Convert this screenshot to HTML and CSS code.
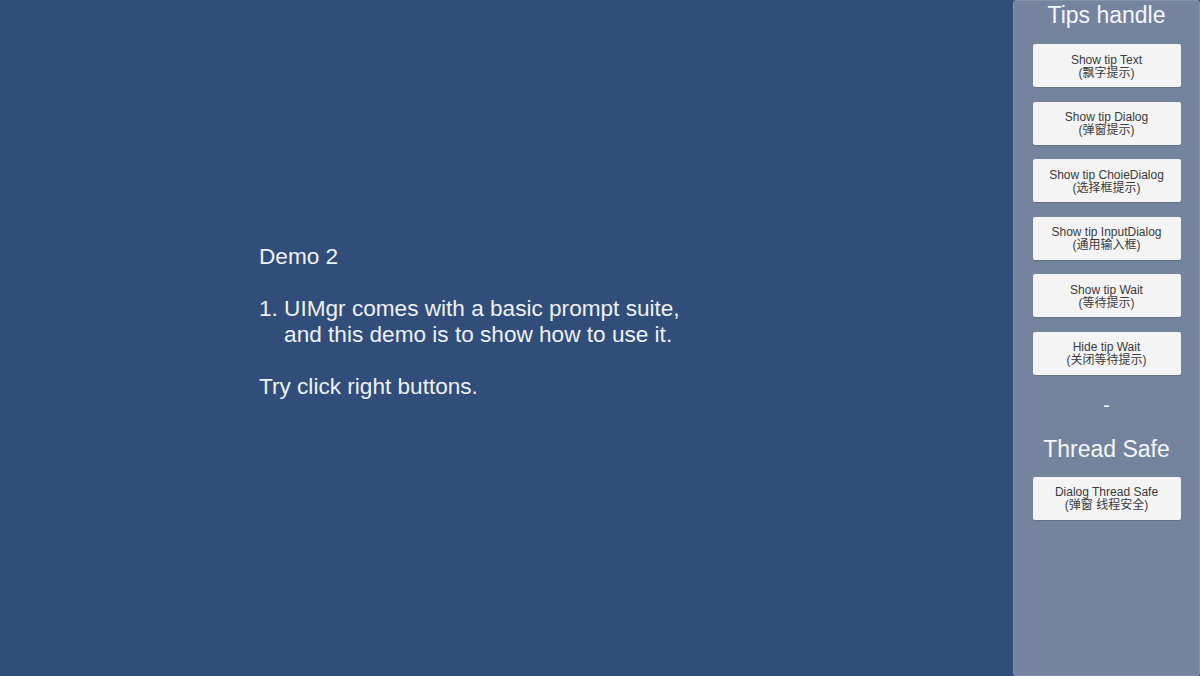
FILE: index.html
```html
<!DOCTYPE html>
<html lang="zh-CN">
<head>
    <meta charset="UTF-8">
    <meta name="viewport" content="width=device-width, initial-scale=1.0">
    <title>UIMgr Demo 2</title>
    <link rel="stylesheet" href="styles.css">
</head>
<body>
    <div class="screen">
        <div class="stage">
            <div class="intro">
                <p>Demo 2</p>
                <p class="gap">1. UIMgr comes with a basic prompt suite,<br>&nbsp;&nbsp;&nbsp;&nbsp;and this demo is to show how to use it.</p>
                <p class="gap">Try click right buttons.</p>
            </div>
        </div>

        <!-- Panel on the right -->
        <div class="panel">
            <div class="panel-title">Tips handle</div>
            <button class="tip-btn">Show tip Text<br>(飘字提示)</button>
            <button class="tip-btn">Show tip Dialog<br>(弹窗提示)</button>
            <button class="tip-btn">Show tip ChoieDialog<br>(选择框提示)</button>
            <button class="tip-btn">Show tip InputDialog<br>(通用输入框)</button>
            <button class="tip-btn">Show tip Wait<br>(等待提示)</button>
            <button class="tip-btn">Hide tip Wait<br>(关闭等待提示)</button>
            <div class="dash">-</div>
            <div class="panel-title section">Thread Safe</div>
            <button class="tip-btn">Dialog Thread Safe<br>(弹窗 线程安全)</button>
        </div>
    </div>
</body>
</html>
```

FILE: styles.css
```css
html, body {
    margin: 0;
    padding: 0;
}
body {
    font-family: "Liberation Sans", Arial, "Noto Sans CJK SC", sans-serif;
    background-color: #314d79;
    width: 1200px;
    height: 676px;
    overflow: hidden;
}
.screen {
    display: flex;
    height: 676px;
}
.stage {
    flex: 1;
    display: flex;
    align-items: flex-start;
    padding: 244px 0 0 259px;
}
.intro {
    color: #eef1f6;
    font-size: 22.6px;
    line-height: 26px;
}
.intro p {
    margin: 0;
}
.intro .gap {
    margin-top: 26px;
}

/* Painel da direita */
.panel {
    width: 185px;
    height: 674px;
    background-color: #74849f;
    border: 1px solid #8391aa;
    border-radius: 3px;
    display: flex;
    flex-direction: column;
    align-items: center;
    box-sizing: content-box;
}
.panel-title {
    color: #f4f6fa;
    font-size: 23px;
    line-height: 28px;
    margin-bottom: 15px;
}
.panel-title.section {
    margin-top: 1px;
    margin-bottom: 14px;
}
.dash {
    color: #f4f6fa;
    font-size: 20px;
    line-height: 24px;
    margin-top: 3.4px;
    margin-bottom: 17px;
}
.tip-btn {
    width: 148px;
    height: 43px;
    margin-bottom: 14.6px;
    padding: 2px 0 0;
    background-color: #f4f4f4;
    color: #3a3a3a;
    border: none;
    border-radius: 2px;
    box-shadow: 0 1px 1px rgba(0, 0, 0, 0.15);
    font-family: "Liberation Sans", Arial, "Noto Sans CJK SC", sans-serif;
    font-size: 12px;
    line-height: 13px;
    cursor: pointer;
}
.tip-btn:last-of-type {
    margin-bottom: 0;
}
```
